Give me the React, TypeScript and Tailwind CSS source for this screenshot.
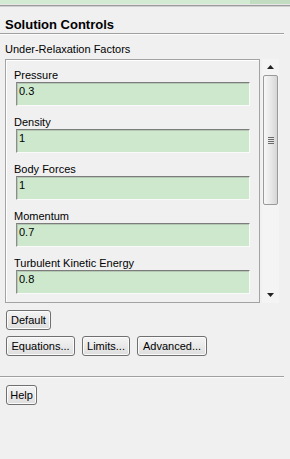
import React from 'react';

interface Factor {
  label: string;
  value: string;
}

const factors: Factor[] = [
  { label: 'Pressure', value: '0.3' },
  { label: 'Density', value: '1' },
  { label: 'Body Forces', value: '1' },
  { label: 'Momentum', value: '0.7' },
  { label: 'Turbulent Kinetic Energy', value: '0.8' },
];

const Button: React.FC<{ label: string; width: string }> = ({ label, width }) => (
  <button
    className={`${width} h-[20px] border border-[#707070] rounded-[3px] bg-gradient-to-b from-[#f4f4f4] to-[#dedede] text-[11px] leading-[13px] text-black text-center shadow-[inset_0_0_0_1px_#fbfbfb]`}
  >
    {label}
  </button>
);

const App: React.FC = () => {
  return (
    <div className="w-[290px] h-[459px] bg-[#f0f0f0] overflow-hidden text-[11px] text-black font-['Liberation_Sans',Arial,sans-serif]">
      {/* top strip of the parent panel */}
      <div className="flex h-[4px]">
        <div className="w-[250px] bg-[#d3ead3]" />
        <div className="flex-1 bg-[#c2dcc2]" />
      </div>
      <div className="h-[1px] bg-[#e6e6e6]" />
      <div className="h-[1px] bg-[#9c9c9c]" />
      <div className="h-[1px] bg-[#cfcfcf]" />

      <div className="mt-[10px] ml-[5px] text-[13px] font-bold leading-[16px]">Solution Controls</div>
      <div className="w-[284px] h-[1px] bg-[#a0a0a0]" />
      <div className="w-[284px] h-[1px] bg-[#fbfbfb]" />

      <div className="mt-[8px] ml-[5px] leading-[13px]">Under-Relaxation Factors</div>

      <div className="mt-[3px] flex h-[244px]">
        {/* group box */}
        <div className="ml-[5px] w-[255px] border border-[#a3a3a3] shadow-[inset_1px_1px_0_#ffffff] overflow-hidden pt-[9px]">
          {factors.map((f, i) => (
            <div key={i} className="mb-[10px]">
              <div className="pl-[8px] leading-[13px]">{f.label}</div>
              <div className="ml-[10px] w-[234px] h-[24px] bg-[#cde8cd] border-t border-l border-t-[#7c7c7c] border-l-[#8c8c8c] border-b border-r border-b-[#fafafa] border-r-[#fafafa] shadow-[inset_1px_1px_0_#b4c8b4] pl-[2px] pt-[2px] leading-[13px]">
                {f.value}
              </div>
            </div>
          ))}
        </div>

        {/* scrollbar */}
        <div className="ml-[2px] w-[17px] bg-[#f4f4f4] flex flex-col items-center">
          <div className="h-[16px] w-full flex items-center justify-center">
            <svg width="7" height="4" viewBox="0 0 7 4">
              <polygon points="3.5,0 7,4 0,4" fill="#222" />
            </svg>
          </div>
          <div className="w-[15px] h-[130px] border border-[#9a9a9a] rounded-[2px] bg-gradient-to-r from-[#f7f7f7] via-[#e9e9e9] to-[#d6d6d6] flex items-center justify-center">
            <div className="flex flex-col gap-[1px]">
              <div className="w-[6px] h-[1px] bg-[#6a6a6a]" />
              <div className="w-[6px] h-[1px] bg-[#6a6a6a]" />
              <div className="w-[6px] h-[1px] bg-[#6a6a6a]" />
              <div className="w-[6px] h-[1px] bg-[#6a6a6a]" />
            </div>
          </div>
          <div className="flex-1" />
          <div className="h-[16px] w-full flex items-center justify-center">
            <svg width="7" height="4" viewBox="0 0 7 4">
              <polygon points="0,0 7,0 3.5,4" fill="#222" />
            </svg>
          </div>
        </div>
      </div>

      <div className="mt-[7px] ml-[6px]">
        <Button label="Default" width="w-[45px]" />
      </div>
      <div className="mt-[6px] ml-[6px] flex gap-[7px]">
        <Button label="Equations..." width="w-[69px]" />
        <Button label="Limits..." width="w-[48px]" />
        <Button label="Advanced..." width="w-[70px]" />
      </div>

      <div className="mt-[20px] w-[284px] h-[1px] bg-[#a0a0a0]" />
      <div className="w-[284px] h-[1px] bg-[#fbfbfb]" />

      <div className="mt-[7px] ml-[6px]">
        <Button label="Help" width="w-[31px]" />
      </div>
    </div>
  );
};

export default App;
